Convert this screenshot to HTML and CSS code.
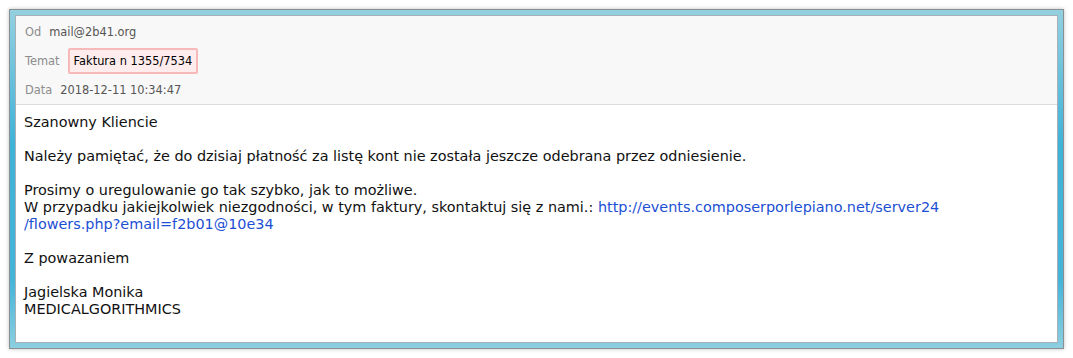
FILE: index.html
```html
<!DOCTYPE html>
<html lang="pl">
<head>
  <meta charset="UTF-8">
  <meta name="viewport" content="width=device-width, initial-scale=1.0">
  <title>Faktura n 1355/7534</title>
  <link rel="stylesheet" href="styles.css">
</head>
<body>

  <!-- Message window -->
  <div class="window">
    <div class="mail">

      <!-- Headers -->
      <div class="mail-head">
        <div class="head-row">
          <span class="head-label">Od</span>
          <span class="head-value">mail@2b41.org</span>
        </div>
        <div class="head-row">
          <span class="head-label">Temat</span>
          <span class="subject">Faktura n 1355/7534</span>
        </div>
        <div class="head-row">
          <span class="head-label">Data</span>
          <span class="head-value">2018-12-11 10:34:47</span>
        </div>
      </div>

      <!-- Body -->
      <div class="mail-body">
        Szanowny Kliencie<br>
        <br>
        Należy pamiętać, że do dzisiaj płatność za listę kont nie została jeszcze odebrana przez odniesienie.<br>
        <br>
        Prosimy o uregulowanie go tak szybko, jak to możliwe.<br>
        W przypadku jakiejkolwiek niezgodności, w tym faktury, skontaktuj się z nami.: <a href="#">http://events.composerporlepiano.net/server24<br>/flowers.php?email=f2b01@10e34</a><br>
        <br>
        Z powazaniem<br>
        <br>
        Jagielska Monika<br>
        MEDICALGORITHMICS
      </div>

    </div>
  </div>

</body>
</html>
```

FILE: styles.css
```css
body {
  font-family: "DejaVu Sans", Verdana, sans-serif;
  margin: 0;
  background: #fff;
}
.window {
  margin: 9px;
  padding: 5px;
  border: 1px solid #8a8f94;
  background: linear-gradient(to bottom, #93d0e0, #3fb2d8 40%, #45b4d9 80%, #8ccfe0);
  box-shadow: 0 0 4px rgba(0, 0, 0, 0.25);
}
.mail {
  height: 326px;
  border: 1px solid #a9b0b5;
  background: #fff;
}
.mail-head {
  padding: 1px 9px 0;
  background: #f8f8f8;
  border-bottom: 1px solid #dcdcdc;
}
.head-row {
  display: flex;
  align-items: center;
  height: 29px;
  font-size: 11.4px;
}
.head-label {
  color: #8c8c8c;
  margin-right: 8px;
}
.head-value {
  color: #555;
}
.subject {
  padding: 4px 4px;
  color: #000;
  background: #ffecec;
  border: 2px solid #f7b9b9;
  border-radius: 2px;
}
.mail-body {
  padding: 9px 8px 0;
  font-size: 14.4px;
  line-height: 17px;
  color: #111;
}
.mail-body a {
  color: #1c4fd4;
  text-decoration: none;
}
```
